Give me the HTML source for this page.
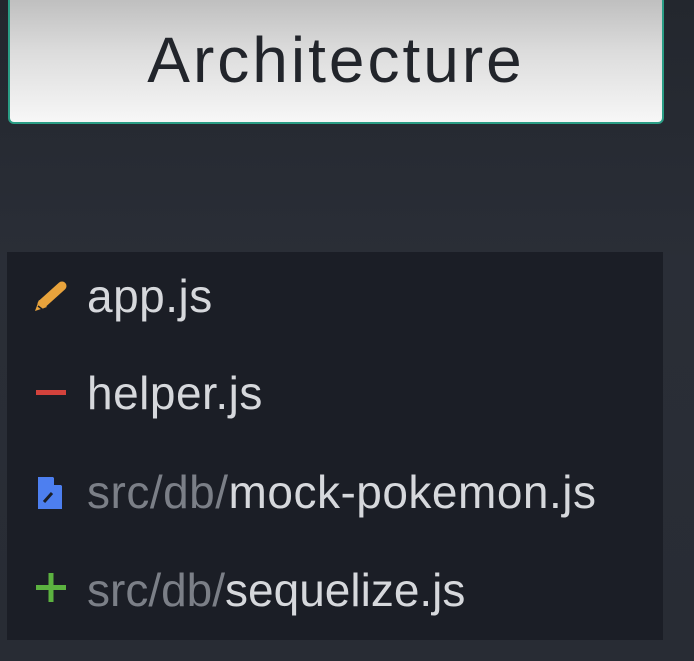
<!DOCTYPE html>
<html><head><meta charset="utf-8"><style>
html,body{margin:0;padding:0;}
body{width:694px;height:661px;overflow:hidden;background:linear-gradient(#23272e,#2a2e37 40%,#282c34);position:relative;font-family:"Liberation Sans",sans-serif;}
.btn{position:absolute;left:8px;top:-8px;width:652px;height:128px;border:2px solid #2a9d85;border-radius:6px;background:linear-gradient(#bcbcbc,#dcdcdc 45%,#f7f7f7);}
.btn span{position:absolute;left:0;right:0;top:29px;text-align:center;font-size:64px;color:#22252b;letter-spacing:3px;font-weight:300;}
.panel{position:absolute;left:7px;top:252px;width:656px;height:388px;background:#1b1e26;}
.row{position:absolute;left:80px;font-size:46px;color:#d6d8dc;line-height:1;letter-spacing:0.5px;}
.dim{color:#7b7f87;}
svg{position:absolute;}
</style></head><body>
<div class="btn"><span>Architecture</span></div>
<div class="panel">
<svg style="left:25px;top:26px" width="40" height="36" viewBox="0 0 40 36"><path d="M10 26 L30 8" stroke="#e8a33c" stroke-width="9" stroke-linecap="round"/><path d="M3 33 L7 22 L15 29 Z" fill="#e8a33c"/><path d="M6 28 l4 3" stroke="#1b1e26" stroke-width="1.5"/></svg>
<div class="row" style="top:21px">app.js</div>
<svg style="left:26px;top:122px" width="36" height="36"><rect x="3" y="16" width="30" height="5" fill="#d3423c"/></svg>
<div class="row" style="top:118px">helper.js</div>
<svg style="left:30px;top:224px" width="26" height="34" viewBox="0 0 26 34"><path d="M1 1 H16 L25 10 V33 H1 Z" fill="#4d7ff0"/><path d="M17 1 V9 H25" fill="#1b1e26"/><path d="M7 26 L15 17" stroke="#1b1e26" stroke-width="3"/></svg>
<div class="row" style="top:217px"><span class="dim">src/db/</span>mock-pokemon.js</div>
<svg style="left:26px;top:317px" width="36" height="36"><rect x="3" y="16" width="30" height="5" fill="#5cb240"/><rect x="15.5" y="4" width="5" height="29" fill="#5cb240"/></svg>
<div class="row" style="top:315px;letter-spacing:0"><span class="dim">src/db/</span>sequelize.js</div>
</div>
</body></html>
